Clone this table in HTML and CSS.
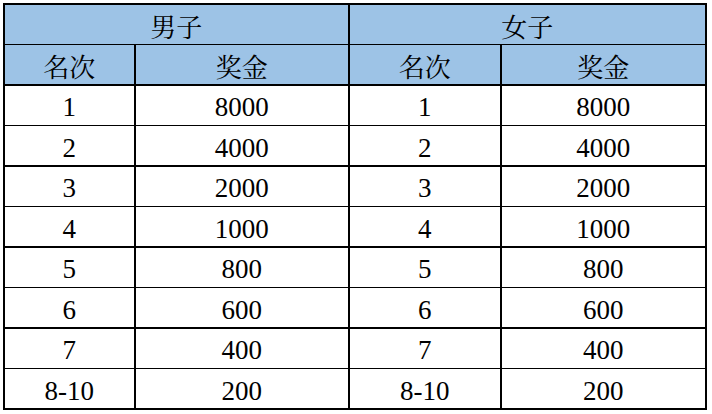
FILE: index.html
```html
<!DOCTYPE html>
<html>
<head>
<meta charset="utf-8">
<link rel="stylesheet" href="styles.css">
</head>
<body>
<div class="prize">
  <div class="cell head span2">男子</div>
  <div class="cell head span2">女子</div>
  <div class="cell head">名次</div><div class="cell head">奖金</div><div class="cell head">名次</div><div class="cell head">奖金</div>
  <div class="cell">1</div><div class="cell">8000</div><div class="cell">1</div><div class="cell">8000</div>
  <div class="cell">2</div><div class="cell">4000</div><div class="cell">2</div><div class="cell">4000</div>
  <div class="cell">3</div><div class="cell">2000</div><div class="cell">3</div><div class="cell">2000</div>
  <div class="cell">4</div><div class="cell">1000</div><div class="cell">4</div><div class="cell">1000</div>
  <div class="cell">5</div><div class="cell">800</div><div class="cell">5</div><div class="cell">800</div>
  <div class="cell">6</div><div class="cell">600</div><div class="cell">6</div><div class="cell">600</div>
  <div class="cell">7</div><div class="cell">400</div><div class="cell">7</div><div class="cell">400</div>
  <div class="cell">8-10</div><div class="cell">200</div><div class="cell">8-10</div><div class="cell">200</div>
</div>
</body>
</html>
```
FILE: styles.css
```css
html, body {
  margin: 0;
  padding: 0;
  background: #ffffff;
}
body {
  padding: 3px 0 0 3px;
}
.prize {
  display: grid;
  grid-template-columns: 129.5px 212.5px 150.5px 203.5px;
  grid-auto-rows: 39px;
  gap: 1.5px;
  padding: 1.5px;
  width: max-content;
  background: #000;
  color: #000;
}
.cell {
  background: #fff;
  display: flex;
  align-items: center;
  justify-content: center;
  font-family: "Liberation Serif", serif;
  font-size: 27px;
  line-height: 1;
  padding-top: 5px;
}
.head {
  background: #9dc3e6;
  font-family: "Noto Serif CJK SC", serif;
  font-size: 26px;
  padding-top: 3px;
}
.span2 {
  grid-column: span 2;
}
```
